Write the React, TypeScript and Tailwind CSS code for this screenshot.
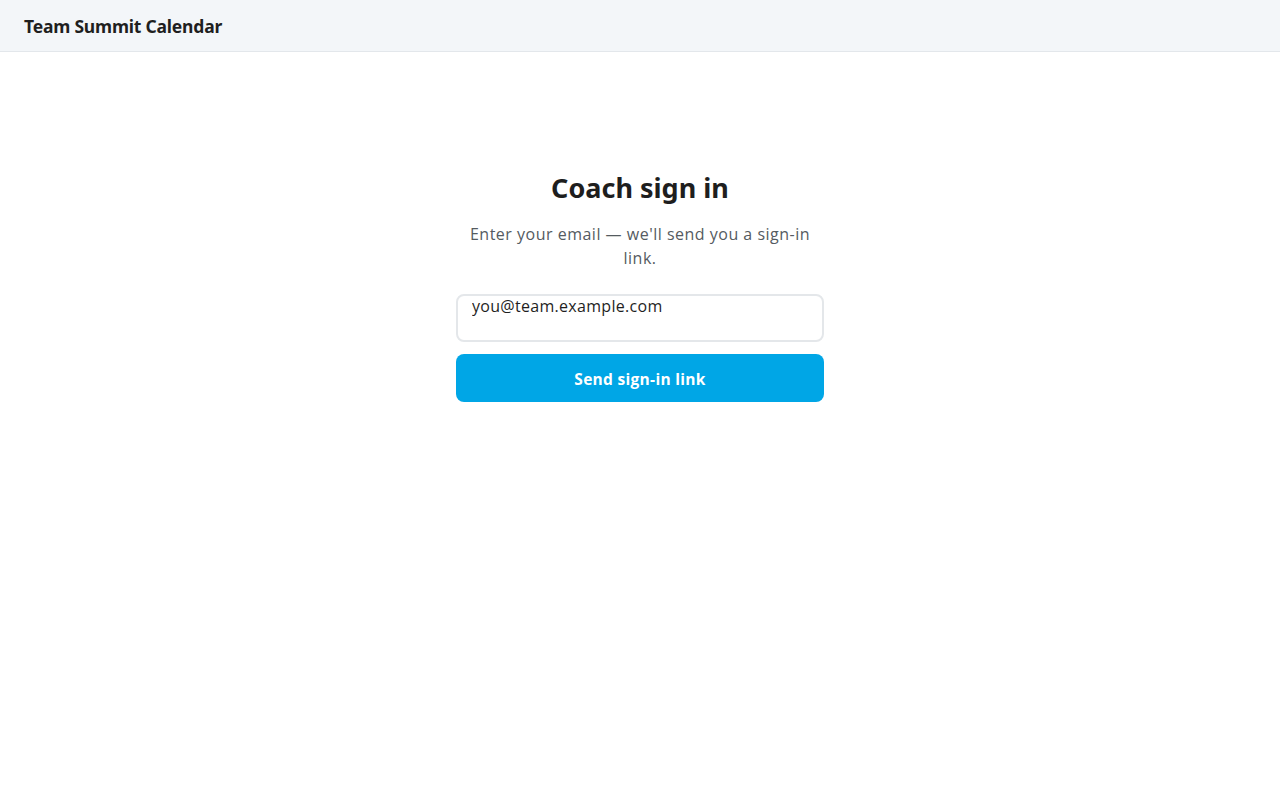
import React, { useState } from 'react';

const headFont = { fontFamily: '"Noto Sans", "Open Sans", sans-serif' };

export default function App() {
  const [email, setEmail] = useState('you@team.example.com');

  return (
    <div className="min-h-screen bg-white text-[#1f1f1f]" style={{ fontFamily: '"Open Sans", "Noto Sans", sans-serif' }}>
      <header className="h-[52px] bg-[#f3f6f9] border-b border-[#e3e7eb] flex items-center px-6 pt-[2px]">
        <h1 className="text-[17.5px] font-bold tracking-[-0.2px]" style={headFont}>Team Summit Calendar</h1>
      </header>

      <main className="flex justify-center pt-[116px]">
        <div className="w-[368px] flex flex-col items-center">
          <h2 className="text-[27px] leading-[40px] font-bold text-[#1e1e1e]" style={headFont}>Coach sign in</h2>
          <p className="mt-[14px] px-[12px] text-center text-[16px] tracking-[0.5px] leading-6 text-[#555b61]">
            Enter your email — we'll send you a sign-in link.
          </p>

          <form className="mt-[24px] w-full flex flex-col gap-3" onSubmit={(e) => e.preventDefault()}>
            <input
              type="email"
              value={email}
              onChange={(e) => setEmail(e.target.value)}
              className="w-full h-[48px] rounded-lg border-2 border-[#e4e7ea] px-[14px] pt-0 pb-[24px] text-[16px] tracking-[0.3px] text-[#1f1f1f] outline-none"
            />
            <button
              type="submit"
              className="w-full h-[48px] rounded-lg bg-[#00a6e6] pt-[3px] text-white text-[15.5px] tracking-[0.3px] font-bold"
            >
              Send sign-in link
            </button>
          </form>
        </div>
      </main>
    </div>
  );
}
